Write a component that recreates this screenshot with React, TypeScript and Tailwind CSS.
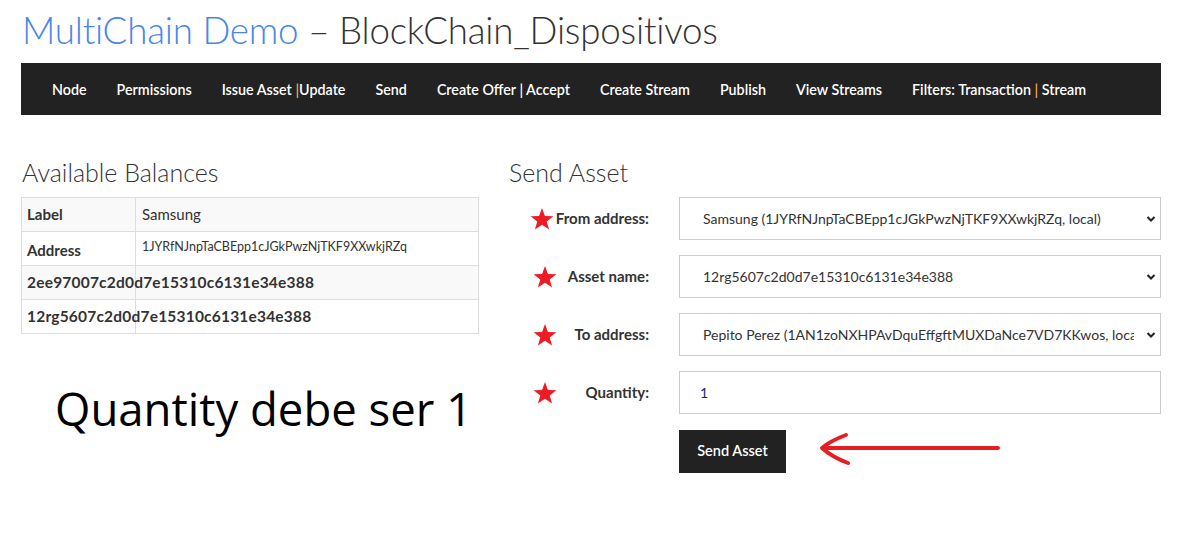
import React from "react";

const Star = ({ className = "" }: { className?: string }) => (
  <svg viewBox="0 0 24 24" className={className} width="24" height="24">
    <polygon
      points="12,1 14.9,9 23.4,9.2 16.7,14.4 19.1,22.6 12,17.8 4.9,22.6 7.3,14.4 0.6,9.2 9.1,9"
      fill="#ed1c24"
    />
  </svg>
);

const Chevron = () => (
  <svg viewBox="0 0 10 8" width="10" height="8" className="absolute right-[4px] top-1/2 -translate-y-1/2">
    <path d="M1.5 2 L5 5.5 L8.5 2" stroke="#222" strokeWidth="2" fill="none" />
  </svg>
);

const FONT = "font-['Lato','Liberation_Sans',sans-serif]";

function Row({
  label,
  starClass,
  children,
}: {
  label: string;
  starClass: string;
  children: React.ReactNode;
}) {
  return (
    <div className="flex items-center h-[43px] mb-[15px]">
      <div className="w-[140px] shrink-0 flex items-center h-full">
        <Star className={starClass} />
        <span className="ml-auto font-bold text-[15px] text-[#333]">{label}</span>
      </div>
      <div className="ml-[30px] w-[482px] shrink-0 h-full relative">{children}</div>
    </div>
  );
}

export default function App() {
  return (
    <div className={`${FONT} bg-white w-[1183px] h-[552px] text-[#333] overflow-hidden`}>
      <div className="ml-[21px] w-[1140px]">
        <h1 className="pt-[7px] h-[63px] text-[36.7px] font-light leading-[46px] pl-[1px] tracking-[-0.2px]">
          <span className="text-[#4a86e8]">MultiChain Demo</span>
          <span className="text-[#333]"> – BlockChain_Dispositivos</span>
        </h1>
        <nav className="bg-[#222] h-[52px] flex items-center pt-[1px] pl-[16px] text-white text-[14.3px] font-semibold">
          <a className="px-[15px]">Node</a>
          <a className="px-[15px]">Permissions</a>
          <a className="px-[15px]">
            Issue Asset <span className="text-[#f0ad4e]">|</span>Update
          </a>
          <a className="px-[15px]">Send</a>
          <a className="px-[15px]">Create Offer | Accept</a>
          <a className="px-[15px]">Create Stream</a>
          <a className="px-[15px]">Publish</a>
          <a className="px-[15px]">View Streams</a>
          <a className="px-[15px]">
            Filters: Transaction <span className="text-[#f0ad4e]">|</span> Stream
          </a>
        </nav>

        <div className="flex mt-[43px]">
          <div className="w-[458px] shrink-0">
            <h2 className="text-[25px] font-light leading-[28px] pl-[1px] mb-[11px]">Available Balances</h2>
            <table className="w-[458px] border-collapse border border-[#ddd] text-[15px]">
              <tbody>
                <tr className="bg-[#f9f9f9] h-[34px]">
                  <td className="border border-[#ddd] w-[114px] px-[5px] font-bold">Label</td>
                  <td className="border border-[#ddd] px-[6px] text-[15px]">Samsung</td>
                </tr>
                <tr className="h-[34px]">
                  <td className="border border-[#ddd] px-[5px] font-bold pt-[4px]">Address</td>
                  <td className="border border-[#ddd] px-[6px] text-[12.5px] align-top pt-[6px]">
                    1JYRfNJnpTaCBEpp1cJGkPwzNjTKF9XXwkjRZq
                  </td>
                </tr>
                <tr className="bg-[#f9f9f9] h-[34px]">
                  <td className="border border-[#ddd] px-[5px] font-bold overflow-visible whitespace-nowrap max-w-[114px]">
                    <div className="w-0 overflow-visible text-[15.5px] tracking-[0.2px]">2ee97007c2d0d7e15310c6131e34e388</div>
                  </td>
                  <td className="border border-[#ddd]"></td>
                </tr>
                <tr className="h-[34px]">
                  <td className="border border-[#ddd] px-[5px] font-bold overflow-visible whitespace-nowrap max-w-[114px]">
                    <div className="w-0 overflow-visible text-[15.5px] tracking-[0.2px]">12rg5607c2d0d7e15310c6131e34e388</div>
                  </td>
                  <td className="border border-[#ddd]"></td>
                </tr>
              </tbody>
            </table>
            <div className="mt-[46px] ml-[34px] font-['Open_Sans','Noto_Sans',sans-serif] text-[45.5px] text-black leading-[56px]">
              Quantity debe ser 1
            </div>
          </div>

          <div className="ml-[30px] w-[652px] shrink-0">
            <h2 className="text-[25px] font-light leading-[28px] mb-[11px]">Send Asset</h2>
            <Row label="From address:" starClass="ml-[21px]">
              <div className="h-full border border-[#ccc] flex items-center pl-[23px] text-[14px] text-[#333] relative">
                Samsung (1JYRfNJnpTaCBEpp1cJGkPwzNjTKF9XXwkjRZq, local)
                <Chevron />
              </div>
            </Row>
            <Row label="Asset name:" starClass="ml-[24px]">
              <div className="h-full border border-[#ccc] flex items-center pl-[23px] text-[14px] text-[#333] relative">
                12rg5607c2d0d7e15310c6131e34e388
                <Chevron />
              </div>
            </Row>
            <Row label="To address:" starClass="ml-[24px]">
              <div className="h-full border border-[#ccc] flex items-center pl-[23px] pr-[26px] text-[14px] text-[#333] relative whitespace-nowrap">
                <span className="overflow-hidden min-w-0">Pepito Perez (1AN1zoNXHPAvDquEffgftMUXDaNce7VD7KKwos, local)</span>
                <Chevron />
              </div>
            </Row>
            <Row label="Quantity:" starClass="ml-[24px]">
              <div className="h-full border border-[#ccc] flex items-center pl-[20px] text-[14px] text-[#1c2a6b]">
                1
              </div>
            </Row>
            <div className="flex items-center">
              <div className="w-[140px] shrink-0" />
              <button className="ml-[30px] bg-[#222] text-white h-[43px] w-[107px] text-[14.5px] font-semibold">
                Send Asset
              </button>
              <svg width="190" height="44" viewBox="0 0 190 44" className="ml-[30px]">
                <path d="M8 19 L182 19" stroke="#e61e24" strokeWidth="4" strokeLinecap="round" fill="none" />
                <path d="M30 6 Q14 12 6 19 Q16 28 32 34" stroke="#e61e24" strokeWidth="4" strokeLinecap="round" strokeLinejoin="round" fill="none" />
              </svg>
            </div>
          </div>
        </div>
      </div>
    </div>
  );
}
